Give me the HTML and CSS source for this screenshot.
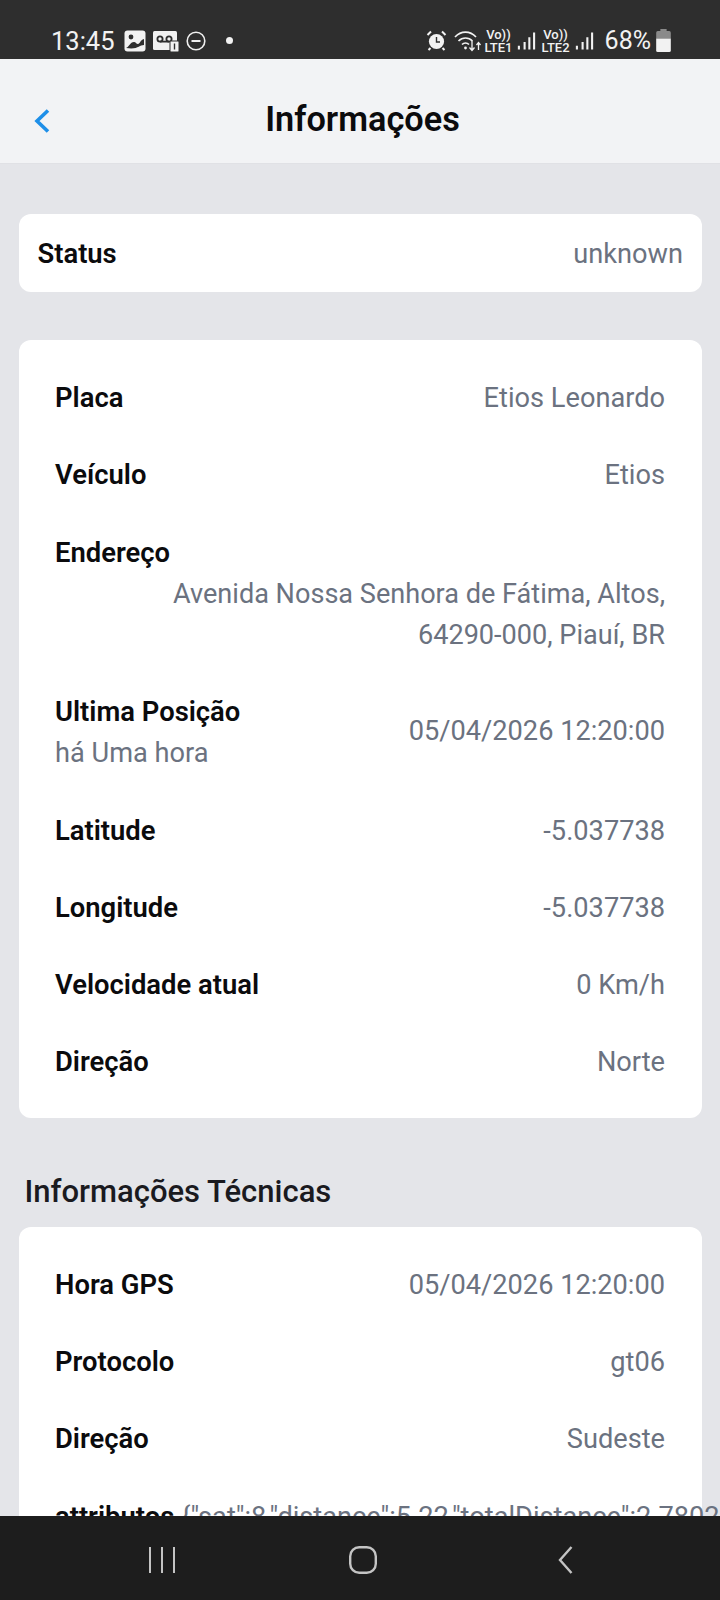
FILE: index.html
```html
<!DOCTYPE html>
<html lang="pt-BR">
<head>
    <meta charset="UTF-8">
    <meta name="viewport" content="width=device-width, initial-scale=1.0">
    <title>Informações</title>
    <link rel="stylesheet" href="styles.css">
</head>
<body>
    <div class="phone">
        <div class="status-bar">
            <div class="status-left">
                <span class="clock">13:45</span>
                <svg class="ico" width="22" height="22" viewBox="0 0 22 22"><rect x="0.5" y="0.5" width="21" height="21" rx="3" fill="#f2f2f2"/><circle cx="7" cy="7" r="2.4" fill="#2e2e2e"/><path d="M2 18c3-1 4-6 8-6 2 0 2 2 4 2s2-4 6-5v6c-5 0-6 5-18 3z" fill="#2e2e2e"/></svg>
                <svg class="ico" width="26" height="22" viewBox="0 0 26 22"><rect x="0" y="1" width="24" height="19" rx="1.5" fill="#f2f2f2"/><circle cx="7" cy="9" r="2.6" fill="none" stroke="#2e2e2e" stroke-width="1.8"/><circle cx="16" cy="9" r="2.6" fill="none" stroke="#2e2e2e" stroke-width="1.8"/><path d="M7 11.6h9" stroke="#2e2e2e" stroke-width="1.8"/><rect x="17" y="11" width="9" height="11" rx="1" fill="#f2f2f2" stroke="#2e2e2e"/><path d="M21.5 13.5v6" stroke="#2e2e2e" stroke-width="1.4"/></svg>
                <svg class="ico" width="20" height="20" viewBox="0 0 20 20"><circle cx="10" cy="10" r="8.8" fill="none" stroke="#f0f0f0" stroke-width="1.6"/><path d="M5.5 10h9" stroke="#f0f0f0" stroke-width="2"/></svg>
                <span class="dot"></span>
            </div>
            <div class="status-right">
                <svg width="21" height="21" viewBox="0 0 21 21"><circle cx="10.5" cy="11.5" r="7.6" fill="#f2f2f2"/><path d="M10.5 7v5h3.5" fill="none" stroke="#2e2e2e" stroke-width="1.4"/><path d="M1.5 5 5 1.5M19.5 5 16 1.5M4.5 18l-2 2M16.500 18l2 2" stroke="#f2f2f2" stroke-width="2"/></svg>
                <svg class="wifi" width="28" height="22" viewBox="0 0 28 22"><path d="M1 7c6-6.500 15-6.500 21 0M4.500 11c4-4 10-4 14 0M8 14.500c2-2 5-2 7 0" fill="none" stroke="#f2f2f2" stroke-width="1.700"/><circle cx="11.500" cy="18" r="1.400" fill="#f2f2f2"/><path d="M18 11v9M15.500 17.500l2.500 3 2.500-3M24.500 20v-7M22.500 15l2-2.500 2 2.500" fill="none" stroke="#f2f2f2" stroke-width="1.300"/></svg>
                <span class="lte"><span>Vo))</span><span>LTE1</span></span>
                <svg width="19" height="20" viewBox="0 0 20 20"><path d="M2 15v4M8 11v8M13 6v13M18 1v18" stroke="#f2f2f2" stroke-width="2.200"/></svg>
                <span class="lte"><span>Vo))</span><span>LTE2</span></span>
                <svg width="19" height="20" viewBox="0 0 20 20"><path d="M2 15v4M8 11v8M13 6v13M18 1v18" stroke="#f2f2f2" stroke-width="2.200"/></svg>
                <span class="battery-text">68%</span>
                <svg width="15" height="23" viewBox="0 0 14 22"><path d="M4 0h6v2h2.500q1.500 0 1.500 1.500V9H0V3.500Q0 2 1.500 2H4z" fill="#8a8a8a"/><path d="M0 9h14v11.500q0 1.500-1.500 1.500h-11Q0 22 0 20.500z" fill="#f2f2f2"/></svg>
            </div>
        </div>

        <div class="app-header">
            <svg class="back" width="18" height="26" viewBox="0 0 18 26"><path d="M15 2.500 4 13l11 10.500" fill="none" stroke="#1e8fe8" stroke-width="3.600"/></svg>
            <h1>Informações</h1>
        </div>

        <div class="content">
            <div class="card card-status">
                <span class="label">Status</span>
                <span class="value">unknown</span>
            </div>

            <div class="card card-list">
                <div class="row"><span class="label">Placa</span><span class="value">Etios Leonardo</span></div>
                <div class="row"><span class="label">Veículo</span><span class="value">Etios</span></div>
                <div class="row-stack">
                    <span class="label">Endereço</span>
                    <span class="value address">Avenida Nossa Senhora de Fátima, Altos, 64290-000, Piauí, BR</span>
                </div>
                <div class="row-two">
                    <div class="label-group">
                        <span class="label">Ultima Posição</span>
                        <span class="sub">há Uma hora</span>
                    </div>
                    <span class="value date">05/04/2026 12:20:00</span>
                </div>
                <div class="row"><span class="label">Latitude</span><span class="value">-5.037738</span></div>
                <div class="row"><span class="label">Longitude</span><span class="value">-5.037738</span></div>
                <div class="row"><span class="label">Velocidade atual</span><span class="value">0 Km/h</span></div>
                <div class="row"><span class="label">Direção</span><span class="value">Norte</span></div>
            </div>

            <h2>Informações Técnicas</h2>

            <div class="card card-tech">
                <div class="row"><span class="label">Hora GPS</span><span class="value">05/04/2026 12:20:00</span></div>
                <div class="row"><span class="label">Protocolo</span><span class="value">gt06</span></div>
                <div class="row"><span class="label">Direção</span><span class="value">Sudeste</span></div>
                <div class="row-attr"><span class="label">attributos</span><span class="value">{"sat":8,"distance":5.22,"totalDistance":2.7802</span></div>
            </div>
        </div>

        <div class="nav-bar">
            <svg width="28" height="28" viewBox="0 0 28 28"><path d="M2 1v26M14 1v26M26 1v26" stroke="#c4c4c4" stroke-width="2"/></svg>
            <svg width="30" height="28" viewBox="0 0 30 28"><rect x="2.200" y="1.200" width="25.600" height="25.600" rx="9" fill="none" stroke="#c4c4c4" stroke-width="2.400"/></svg>
            <svg class="nav-back" width="20" height="28" viewBox="0 0 20 28"><path d="M15.500 1 4 14l11.500 13" fill="none" stroke="#c4c4c4" stroke-width="2.400"/></svg>
        </div>
    </div>
</body>
</html>
```

FILE: styles.css
```css
body {
    margin: 0;
    padding: 0;
    font-family: Roboto, "Liberation Sans", sans-serif;
    background-color: #e4e5e9;
}
.phone {
    width: 720px;
    height: 1600px;
    display: flex;
    flex-direction: column;
    overflow: hidden;
}
.status-bar {
    height: 59px;
    flex-shrink: 0;
    background-color: #2e2e2e;
    color: #f2f2f2;
    display: flex;
    justify-content: space-between;
    align-items: center;
    padding: 22px 49px 0 51px;
    box-sizing: border-box;
}
.status-left, .status-right {
    display: flex;
    align-items: center;
}
.status-left {
    gap: 7px;
}
.status-right {
    gap: 5px;
}
.clock {
    font-size: 25.5px;
    margin-right: 2px;
}
.dot {
    width: 7px;
    height: 7px;
    border-radius: 50%;
    background-color: #f2f2f2;
    margin-left: 13px;
}
.wifi {
    margin-left: 2px;
    margin-right: -3px;
}
.lte {
    display: flex;
    flex-direction: column;
    align-items: center;
    font-size: 13px;
    font-weight: 500;
    line-height: 13px;
}
.battery-text {
    font-size: 25px;
    margin-left: 6px;
    margin-right: 0;
}
.app-header {
    height: 105px;
    flex-shrink: 0;
    background-color: #f2f3f5;
    border-bottom: 1px solid #e0e1e5;
    box-sizing: border-box;
    display: flex;
    align-items: center;
    justify-content: center;
    position: relative;
}
.back {
    position: absolute;
    left: 33px;
    top: 49px;
}
h1 {
    margin: 16px 0 0 5px;
    font-size: 34.3px;
    font-weight: 600;
    color: #0b0b0d;
}
.content {
    flex: 1;
    min-height: 0;
    overflow: hidden;
    padding: 50px 18.5px 0;
}
.card {
    background-color: #fff;
    border-radius: 12px;
}
.card-status {
    height: 78px;
    box-sizing: border-box;
    display: flex;
    justify-content: space-between;
    align-items: center;
    padding: 2px 18.5px 0 19px;
    margin-bottom: 48px;
}
.card-list {
    padding: 19px 36.5px 18px 36.5px;
}
.card-tech {
    padding: 19px 36.5px 120px 36.5px;
}
.row {
    height: 77px;
    display: flex;
    justify-content: space-between;
    align-items: center;
}
.row-stack {
    padding-top: 25px;
    display: flex;
    flex-direction: column;
}
.row-two {
    padding: 41px 0 24px;
    display: flex;
    justify-content: space-between;
    align-items: center;
}
.label-group {
    display: flex;
    flex-direction: column;
    gap: 11px;
}
.label {
    font-size: 27.4px;
    font-weight: 600;
    color: #0b0b0d;
    line-height: 30px;
    white-space: nowrap;
}
.value {
    font-size: 27.2px;
    color: #6b7280;
    line-height: 30px;
    white-space: nowrap;
}
.date {
    margin-bottom: 4px;
}
.sub {
    font-size: 27.2px;
    color: #6b7280;
    line-height: 30px;
}
.address {
    font-size: 27.1px;
    white-space: normal;
    text-align: right;
    line-height: 41px;
    margin-top: 6px;
    padding-left: 90px;
}
h2 {
    margin: 0;
    font-size: 31px;
    font-weight: 500;
    color: #1a1a1f;
    padding: 56px 6px 17px;
    line-height: 36px;
}
.row-attr {
    display: flex;
    gap: 7px;
    margin-top: 25px;
    white-space: nowrap;
}
.nav-bar {
    height: 84px;
    flex-shrink: 0;
    background-color: #1d1d1d;
    display: flex;
    align-items: center;
    gap: 172px;
    padding: 3px 0 0 148px;
    box-sizing: border-box;
}
.nav-back {
    margin-left: 6px;
}
```
